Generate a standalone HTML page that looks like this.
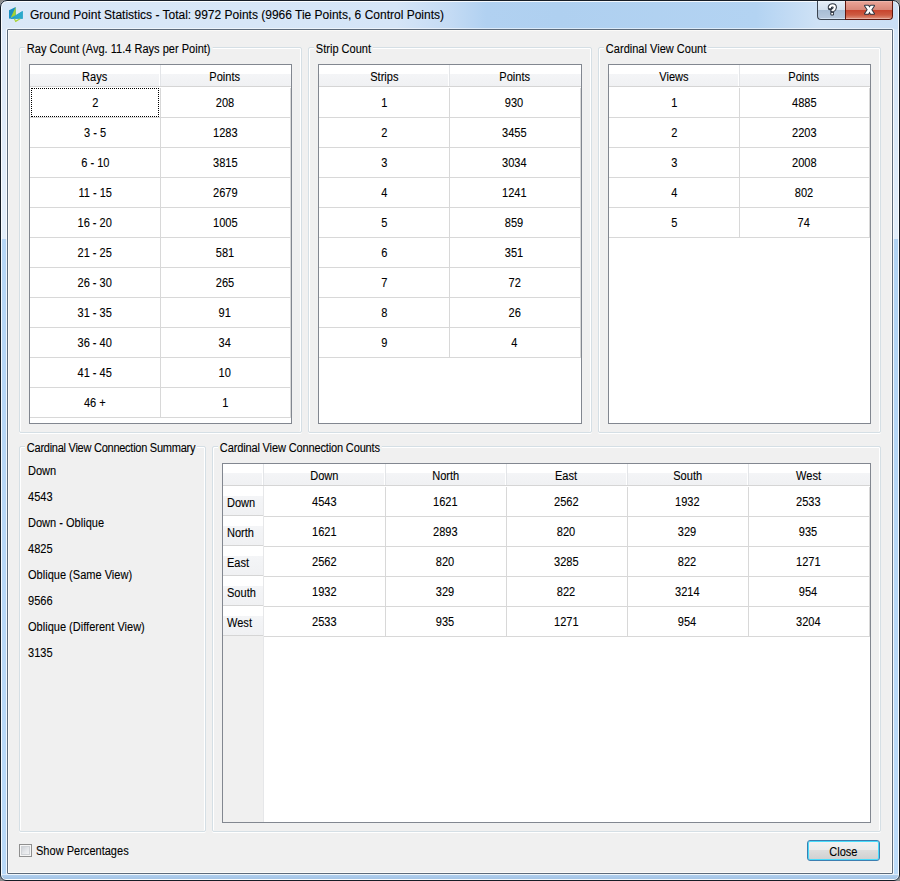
<!DOCTYPE html>
<html><head><meta charset="utf-8">
<style>
*{box-sizing:border-box}
html,body{-webkit-text-stroke:0.1px #000;margin:0;padding:0}
body{-webkit-text-stroke:0.1px #000;width:900px;height:881px;overflow:hidden;position:relative;background:#8c8c8c;font-family:"Liberation Sans",sans-serif;font-size:11px;color:#000}
.a{position:absolute}
#winbg{left:0;top:0;width:900px;height:881px;background:linear-gradient(90deg,#dae8f7 0%,#d5e5f7 44%,#c4dbf4 50%,#b1d1f1 54%,#afd0f0 62%,#b3d3f2 84%,#cfe2f6 91%,#cbdff5 100%);}
#win{left:0;top:0;width:900px;height:881px;border:1px solid #161d26;border-radius:7px 7px 6px 6px;box-shadow:inset 0 0 0 1px rgba(255,255,255,.85)}
#sideL{left:0;top:29px;width:7px;height:845px;background:linear-gradient(#dde9f8 0,#e3eefa 210px,#b6d6f6 210px,#b9d9f8 100%);border-right:1px solid rgba(255,255,255,.55)}
#sideR{left:893px;top:29px;width:7px;height:845px;background:linear-gradient(#d3e5f8 0,#e3eefa 210px,#b2d4f4 210px,#bddcfa 100%);border-left:1px solid rgba(255,255,255,.6)}
#bot{left:0;top:874px;width:900px;height:5px;background:linear-gradient(#dceaf9 0,#dceaf9 1px,#b0cfee 1px,#a3c3e4 100%)}
#inner{left:7px;top:29px;width:886px;height:845px;border:1px solid #5d6b7b;background:#f0f0f0;box-shadow:inset 0 0 0 1px #fbfaf8,0 0 0 1px rgba(255,255,255,.55);border-radius:1px}
.title{left:30px;top:7px;font-size:12px;line-height:15px;white-space:nowrap;color:#000}
.gb{border:1px solid #d5dfe5;border-radius:2px;box-shadow:inset 1px 1px 0 #fff,inset -1px 0 0 #fff,0 1px 0 #fff}
.gl{background:#f0f0f0;padding:0 2px;white-space:nowrap;line-height:13px}
.tbl{border:1px solid #828790;background:#fff}
.hdr{height:22px;background:linear-gradient(#fff 0,#fff 9px,#f4f5f7 9px,#f0f1f3 21px,#d5d5d5 21px)}
.vh{height:30px;background:linear-gradient(#fff 0,#fff 10px,#f4f5f7 10px,#f0f1f3 29px,#d5d5d5 29px)}
.hs{width:1px;height:21px;background:#e3e5e8;box-shadow:-1px 0 0 #fff}
.gh{height:1px;background:#d8d8d8}
.gv{width:1px;background:#d8d8d8}
.c{text-align:center;white-space:nowrap;line-height:13px}
.l{white-space:nowrap;line-height:13px}
.focus{border:1px dotted #000}

.c,.l,.gl{font-size:12px}.s{display:inline-block;position:relative;top:1px;transform:scaleX(0.92);transform-origin:left}.c .s{transform-origin:center}.gl{background:none;padding:0}.gl .s{transform-origin:left;background:#f0f0f0;padding:0 2px}
</style></head><body>
<div class="a" style="left:0;top:0;width:900px;height:881px;border-radius:7px 7px 6px 6px;overflow:hidden">
<div id="winbg" class="a"></div>
<div id="sideL" class="a"></div>
<div id="sideR" class="a"></div>
<div id="bot" class="a"></div>
</div>
<div id="win" class="a"></div>
<div id="inner" class="a"></div>
<svg class="a" style="left:0;top:0" width="30" height="30" viewBox="0 0 30 30">
 <polygon points="9,10.3 15.7,7 15.7,15.5 9,18.8" fill="#1b8fc1"/>
 <polygon points="15.7,7 15.7,15.5 10.8,17.6" fill="#a7d32f"/>
 <polygon points="9.3,18.9 22.7,11 22.7,18.7" fill="#1d9cc6"/>
 <polygon points="13,17.3 18,14 22.7,11 22.7,18.7" fill="#2aa9cb"/>
 <polygon points="13.8,18.8 15.5,22.2 21,18.8 19.2,18.8 15.7,20.6 15.3,18.8" fill="#a7d32f"/>
</svg>
<div class="a title" style="top:8px">Ground Point Statistics - Total: 9972 Points (9966 Tie Points, 6 Control Points)</div>
<div class="a" style="left:817px;top:1px;width:29px;height:19px;border:1px solid #3b4450;border-top:none;border-right:none;border-radius:0 0 0 4px;background:linear-gradient(#f6f9fc 0,#e4edf7 1px,#d3e0ee 9px,#a8bdd4 9px,#b6c8dd 17px,#d3e2f2 17px)"></div>
<div class="a" style="left:845px;top:1px;width:48px;height:19px;border:1px solid #5e160c;border-top:none;border-radius:0 0 4px 0;background:linear-gradient(#f3c9c0 0,#e8a295 1px,#d88778 9px,#c8432c 9px,#cd5b42 14px,#dc8670 17px,#e7ad9f 17px)"></div>
<svg class="a" style="left:0;top:0" width="900" height="24" viewBox="0 0 900 24">
 <path d="M829.9 8.2 L829.9 6.9 Q830.6 5.3 832.5 5.3 Q834.8 5.3 834.8 7.4 Q834.8 9.1 832.6 10.4 L832.3 11.2" fill="none" stroke="#2c3440" stroke-width="4.2" stroke-linejoin="round" stroke-linecap="round"/>
 <rect x="830.4" y="12" width="3.6" height="3.4" rx="1.2" fill="#2c3440"/>
 <path d="M829.9 8.2 L829.9 6.9 Q830.6 5.3 832.5 5.3 Q834.8 5.3 834.8 7.4 Q834.8 9.1 832.6 10.4 L832.3 11.2" fill="none" stroke="#fff" stroke-width="2.2" stroke-linejoin="round"/>
 <rect x="831.3" y="12.9" width="1.8" height="1.6" fill="#fff"/>
 <polygon points="865,5.8 868.3,5.8 869.5,7.8 870.7,5.8 874,5.8 871.3,9.7 874,13.7 870.7,13.7 869.5,11.6 868.3,13.7 865,13.7 867.7,9.7" fill="#fff" stroke="#2c3440" stroke-width="2" stroke-linejoin="round" paint-order="stroke"/>
</svg>
<div class="a gb" style="left:19px;top:47px;width:283px;height:386px"></div>
<div class="a gl" style="left:25px;top:42px"><span class="s">Ray Count (Avg. 11.4 Rays per Point)</span></div>
<div class="a gb" style="left:308px;top:47px;width:284px;height:386px"></div>
<div class="a gl" style="left:314px;top:42px"><span class="s">Strip Count</span></div>
<div class="a gb" style="left:598px;top:47px;width:283px;height:386px"></div>
<div class="a gl" style="left:604px;top:42px"><span class="s">Cardinal View Count</span></div>
<div class="a gb" style="left:19px;top:446px;width:187px;height:386px"></div>
<div class="a gl" style="left:25px;top:441px;letter-spacing:-0.3px"><span class="s">Cardinal View Connection Summary</span></div>
<div class="a gb" style="left:212px;top:446px;width:669px;height:386px"></div>
<div class="a gl" style="left:218px;top:441px;letter-spacing:-0.17px"><span class="s">Cardinal View Connection Counts</span></div>

<div class="a tbl" style="left:29px;top:64px;width:263px;height:360px"></div>
<div class="a hdr" style="left:30px;top:65px;width:261px"></div>
<div class="a hs" style="left:160px;top:65px"></div>
<div class="a c" style="left:30px;top:70px;width:130px"><span class="s">Rays</span></div>
<div class="a c" style="left:160px;top:70px;width:130px"><span class="s">Points</span></div>
<div class="a gh" style="left:30px;top:117px;width:260px"></div>
<div class="a gh" style="left:30px;top:147px;width:260px"></div>
<div class="a gh" style="left:30px;top:177px;width:260px"></div>
<div class="a gh" style="left:30px;top:207px;width:260px"></div>
<div class="a gh" style="left:30px;top:237px;width:260px"></div>
<div class="a gh" style="left:30px;top:267px;width:260px"></div>
<div class="a gh" style="left:30px;top:297px;width:260px"></div>
<div class="a gh" style="left:30px;top:327px;width:260px"></div>
<div class="a gh" style="left:30px;top:357px;width:260px"></div>
<div class="a gh" style="left:30px;top:387px;width:260px"></div>
<div class="a gh" style="left:30px;top:417px;width:260px"></div>
<div class="a gv" style="left:160px;top:88px;height:330px"></div>
<div class="a gv" style="left:290px;top:88px;height:330px"></div>
<div class="a c" style="left:30px;top:96px;width:130px"><span class="s">2</span></div>
<div class="a c" style="left:160px;top:96px;width:130px"><span class="s">208</span></div>
<div class="a c" style="left:30px;top:126px;width:130px"><span class="s">3 - 5</span></div>
<div class="a c" style="left:160px;top:126px;width:130px"><span class="s">1283</span></div>
<div class="a c" style="left:30px;top:156px;width:130px"><span class="s">6 - 10</span></div>
<div class="a c" style="left:160px;top:156px;width:130px"><span class="s">3815</span></div>
<div class="a c" style="left:30px;top:186px;width:130px"><span class="s">11 - 15</span></div>
<div class="a c" style="left:160px;top:186px;width:130px"><span class="s">2679</span></div>
<div class="a c" style="left:30px;top:216px;width:130px"><span class="s">16 - 20</span></div>
<div class="a c" style="left:160px;top:216px;width:130px"><span class="s">1005</span></div>
<div class="a c" style="left:30px;top:246px;width:130px"><span class="s">21 - 25</span></div>
<div class="a c" style="left:160px;top:246px;width:130px"><span class="s">581</span></div>
<div class="a c" style="left:30px;top:276px;width:130px"><span class="s">26 - 30</span></div>
<div class="a c" style="left:160px;top:276px;width:130px"><span class="s">265</span></div>
<div class="a c" style="left:30px;top:306px;width:130px"><span class="s">31 - 35</span></div>
<div class="a c" style="left:160px;top:306px;width:130px"><span class="s">91</span></div>
<div class="a c" style="left:30px;top:336px;width:130px"><span class="s">36 - 40</span></div>
<div class="a c" style="left:160px;top:336px;width:130px"><span class="s">34</span></div>
<div class="a c" style="left:30px;top:366px;width:130px"><span class="s">41 - 45</span></div>
<div class="a c" style="left:160px;top:366px;width:130px"><span class="s">10</span></div>
<div class="a c" style="left:30px;top:396px;width:130px"><span class="s">46 +</span></div>
<div class="a c" style="left:160px;top:396px;width:130px"><span class="s">1</span></div>
<div class="a focus" style="left:31px;top:88px;width:128px;height:29px"></div>
<div class="a tbl" style="left:318px;top:64px;width:264px;height:360px"></div>
<div class="a hdr" style="left:319px;top:65px;width:262px"></div>
<div class="a hs" style="left:449px;top:65px"></div>
<div class="a c" style="left:319px;top:70px;width:130px"><span class="s">Strips</span></div>
<div class="a c" style="left:449px;top:70px;width:131px"><span class="s">Points</span></div>
<div class="a gh" style="left:319px;top:117px;width:261px"></div>
<div class="a gh" style="left:319px;top:147px;width:261px"></div>
<div class="a gh" style="left:319px;top:177px;width:261px"></div>
<div class="a gh" style="left:319px;top:207px;width:261px"></div>
<div class="a gh" style="left:319px;top:237px;width:261px"></div>
<div class="a gh" style="left:319px;top:267px;width:261px"></div>
<div class="a gh" style="left:319px;top:297px;width:261px"></div>
<div class="a gh" style="left:319px;top:327px;width:261px"></div>
<div class="a gh" style="left:319px;top:357px;width:261px"></div>
<div class="a gv" style="left:449px;top:88px;height:270px"></div>
<div class="a gv" style="left:580px;top:88px;height:270px"></div>
<div class="a c" style="left:319px;top:96px;width:130px"><span class="s">1</span></div>
<div class="a c" style="left:449px;top:96px;width:131px"><span class="s">930</span></div>
<div class="a c" style="left:319px;top:126px;width:130px"><span class="s">2</span></div>
<div class="a c" style="left:449px;top:126px;width:131px"><span class="s">3455</span></div>
<div class="a c" style="left:319px;top:156px;width:130px"><span class="s">3</span></div>
<div class="a c" style="left:449px;top:156px;width:131px"><span class="s">3034</span></div>
<div class="a c" style="left:319px;top:186px;width:130px"><span class="s">4</span></div>
<div class="a c" style="left:449px;top:186px;width:131px"><span class="s">1241</span></div>
<div class="a c" style="left:319px;top:216px;width:130px"><span class="s">5</span></div>
<div class="a c" style="left:449px;top:216px;width:131px"><span class="s">859</span></div>
<div class="a c" style="left:319px;top:246px;width:130px"><span class="s">6</span></div>
<div class="a c" style="left:449px;top:246px;width:131px"><span class="s">351</span></div>
<div class="a c" style="left:319px;top:276px;width:130px"><span class="s">7</span></div>
<div class="a c" style="left:449px;top:276px;width:131px"><span class="s">72</span></div>
<div class="a c" style="left:319px;top:306px;width:130px"><span class="s">8</span></div>
<div class="a c" style="left:449px;top:306px;width:131px"><span class="s">26</span></div>
<div class="a c" style="left:319px;top:336px;width:130px"><span class="s">9</span></div>
<div class="a c" style="left:449px;top:336px;width:131px"><span class="s">4</span></div>
<div class="a tbl" style="left:608px;top:64px;width:263px;height:360px"></div>
<div class="a hdr" style="left:609px;top:65px;width:261px"></div>
<div class="a hs" style="left:739px;top:65px"></div>
<div class="a c" style="left:609px;top:70px;width:130px"><span class="s">Views</span></div>
<div class="a c" style="left:739px;top:70px;width:130px"><span class="s">Points</span></div>
<div class="a gh" style="left:609px;top:117px;width:260px"></div>
<div class="a gh" style="left:609px;top:147px;width:260px"></div>
<div class="a gh" style="left:609px;top:177px;width:260px"></div>
<div class="a gh" style="left:609px;top:207px;width:260px"></div>
<div class="a gh" style="left:609px;top:237px;width:260px"></div>
<div class="a gv" style="left:739px;top:88px;height:150px"></div>
<div class="a gv" style="left:869px;top:88px;height:150px"></div>
<div class="a c" style="left:609px;top:96px;width:130px"><span class="s">1</span></div>
<div class="a c" style="left:739px;top:96px;width:130px"><span class="s">4885</span></div>
<div class="a c" style="left:609px;top:126px;width:130px"><span class="s">2</span></div>
<div class="a c" style="left:739px;top:126px;width:130px"><span class="s">2203</span></div>
<div class="a c" style="left:609px;top:156px;width:130px"><span class="s">3</span></div>
<div class="a c" style="left:739px;top:156px;width:130px"><span class="s">2008</span></div>
<div class="a c" style="left:609px;top:186px;width:130px"><span class="s">4</span></div>
<div class="a c" style="left:739px;top:186px;width:130px"><span class="s">802</span></div>
<div class="a c" style="left:609px;top:216px;width:130px"><span class="s">5</span></div>
<div class="a c" style="left:739px;top:216px;width:130px"><span class="s">74</span></div>
<div class="a tbl" style="left:222px;top:463px;width:649px;height:360px"></div>
<div class="a hdr" style="left:223px;top:464px;width:647px"></div>
<div class="a hs" style="left:263px;top:464px"></div>
<div class="a hs" style="left:385px;top:464px"></div>
<div class="a hs" style="left:506px;top:464px"></div>
<div class="a hs" style="left:627px;top:464px"></div>
<div class="a hs" style="left:748px;top:464px"></div>
<div class="a c" style="left:264px;top:469px;width:121px"><span class="s">Down</span></div>
<div class="a c" style="left:385px;top:469px;width:121px"><span class="s">North</span></div>
<div class="a c" style="left:506px;top:469px;width:121px"><span class="s">East</span></div>
<div class="a c" style="left:627px;top:469px;width:121px"><span class="s">South</span></div>
<div class="a c" style="left:748px;top:469px;width:121px"><span class="s">West</span></div>
<div class="a" style="left:223px;top:486px;width:40px;height:336px;background:#f0f0f0"></div>
<div class="a" style="left:263px;top:486px;width:1px;height:336px;background:#e6e7e9"></div>
<div class="a vh" style="left:223px;top:486px;width:40px"></div>
<div class="a l" style="left:227px;top:496px"><span class="s">Down</span></div>
<div class="a vh" style="left:223px;top:516px;width:40px"></div>
<div class="a l" style="left:227px;top:526px"><span class="s">North</span></div>
<div class="a vh" style="left:223px;top:546px;width:40px"></div>
<div class="a l" style="left:227px;top:556px"><span class="s">East</span></div>
<div class="a vh" style="left:223px;top:576px;width:40px"></div>
<div class="a l" style="left:227px;top:586px"><span class="s">South</span></div>
<div class="a vh" style="left:223px;top:606px;width:40px"></div>
<div class="a l" style="left:227px;top:616px"><span class="s">West</span></div>
<div class="a gh" style="left:264px;top:516px;width:605px"></div>
<div class="a gh" style="left:264px;top:546px;width:605px"></div>
<div class="a gh" style="left:264px;top:576px;width:605px"></div>
<div class="a gh" style="left:264px;top:606px;width:605px"></div>
<div class="a gh" style="left:264px;top:636px;width:605px"></div>
<div class="a gv" style="left:385px;top:487px;height:150px"></div>
<div class="a gv" style="left:506px;top:487px;height:150px"></div>
<div class="a gv" style="left:627px;top:487px;height:150px"></div>
<div class="a gv" style="left:748px;top:487px;height:150px"></div>
<div class="a gv" style="left:869px;top:487px;height:150px"></div>
<div class="a c" style="left:264px;top:495px;width:121px"><span class="s">4543</span></div>
<div class="a c" style="left:385px;top:495px;width:121px"><span class="s">1621</span></div>
<div class="a c" style="left:506px;top:495px;width:121px"><span class="s">2562</span></div>
<div class="a c" style="left:627px;top:495px;width:121px"><span class="s">1932</span></div>
<div class="a c" style="left:748px;top:495px;width:121px"><span class="s">2533</span></div>
<div class="a c" style="left:264px;top:525px;width:121px"><span class="s">1621</span></div>
<div class="a c" style="left:385px;top:525px;width:121px"><span class="s">2893</span></div>
<div class="a c" style="left:506px;top:525px;width:121px"><span class="s">820</span></div>
<div class="a c" style="left:627px;top:525px;width:121px"><span class="s">329</span></div>
<div class="a c" style="left:748px;top:525px;width:121px"><span class="s">935</span></div>
<div class="a c" style="left:264px;top:555px;width:121px"><span class="s">2562</span></div>
<div class="a c" style="left:385px;top:555px;width:121px"><span class="s">820</span></div>
<div class="a c" style="left:506px;top:555px;width:121px"><span class="s">3285</span></div>
<div class="a c" style="left:627px;top:555px;width:121px"><span class="s">822</span></div>
<div class="a c" style="left:748px;top:555px;width:121px"><span class="s">1271</span></div>
<div class="a c" style="left:264px;top:585px;width:121px"><span class="s">1932</span></div>
<div class="a c" style="left:385px;top:585px;width:121px"><span class="s">329</span></div>
<div class="a c" style="left:506px;top:585px;width:121px"><span class="s">822</span></div>
<div class="a c" style="left:627px;top:585px;width:121px"><span class="s">3214</span></div>
<div class="a c" style="left:748px;top:585px;width:121px"><span class="s">954</span></div>
<div class="a c" style="left:264px;top:615px;width:121px"><span class="s">2533</span></div>
<div class="a c" style="left:385px;top:615px;width:121px"><span class="s">935</span></div>
<div class="a c" style="left:506px;top:615px;width:121px"><span class="s">1271</span></div>
<div class="a c" style="left:627px;top:615px;width:121px"><span class="s">954</span></div>
<div class="a c" style="left:748px;top:615px;width:121px"><span class="s">3204</span></div>
<div class="a l" style="left:28px;top:464px"><span class="s">Down</span></div>
<div class="a l" style="left:28px;top:490px"><span class="s">4543</span></div>
<div class="a l" style="left:28px;top:516px"><span class="s">Down - Oblique</span></div>
<div class="a l" style="left:28px;top:542px"><span class="s">4825</span></div>
<div class="a l" style="left:28px;top:568px"><span class="s">Oblique (Same View)</span></div>
<div class="a l" style="left:28px;top:594px"><span class="s">9566</span></div>
<div class="a l" style="left:28px;top:620px"><span class="s">Oblique (Different View)</span></div>
<div class="a l" style="left:28px;top:646px"><span class="s">3135</span></div>
<div class="a" style="left:19px;top:844px;width:13px;height:13px;border:1px solid #8f8f8f;background:linear-gradient(135deg,#c3c7cd,#e6e8eb 55%,#f7f7f8);box-shadow:inset 0 0 0 1px #f6f6f6, inset 0 0 0 2px #cfd2d6"></div>
<div class="a l" style="left:36px;top:844px"><span class="s">Show Percentages</span></div>
<div class="a" style="left:807px;top:840px;width:73px;height:21px;border:1px solid #3c7fb1;border-radius:3px;background:linear-gradient(#f2f2f2 0,#ebebeb 50%,#dddddd 50%,#cfcfcf 100%);box-shadow:inset 0 0 0 1px #48dbfb"></div>
<div class="a c" style="left:807px;top:845px;width:73px"><span class="s">Close</span></div>

</body></html>
